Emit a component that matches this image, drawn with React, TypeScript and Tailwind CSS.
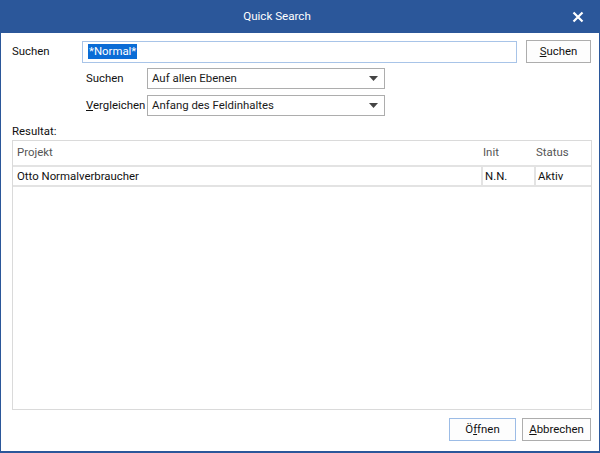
import React from 'react';

function Arrow() {
  return (
    <svg width="9" height="5" viewBox="0 0 9 5" className="shrink-0">
      <path d="M0 0h9L4.5 5z" fill="#444" />
    </svg>
  );
}

function Dropdown({ value }: { value: string }) {
  return (
    <div className="w-[238px] h-[21px] border border-[#adadad] bg-white flex items-center pl-[4px] pr-[6px]">
      <span className="flex-1 text-[#1a1a1a]">{value}</span>
      <Arrow />
    </div>
  );
}

export default function App() {
  return (
    <div
      className="w-[600px] h-[453px] flex flex-col bg-[#2b579a] px-px pb-[2px] text-[11.4px]"
      style={{ fontFamily: 'Roboto, "Liberation Sans", sans-serif' }}
    >
      <div className="h-[33px] flex items-center relative text-white">
        <div className="flex-1 text-center text-[11.6px] pr-[46px]">Quick Search</div>
        <svg width="12" height="12" viewBox="0 0 12 12" className="absolute right-[15px] top-[11px]">
          <path d="M1.5 1.5l9 9M10.5 1.5l-9 9" stroke="white" strokeWidth="2.2" />
        </svg>
      </div>

      <div className="flex-1 bg-white flex flex-col pl-[11px] pr-[8px] text-[#111]">
        <div className="flex items-center mt-[7px] h-[23px]">
          <div className="w-[70px]">Suchen</div>
          <div className="w-[435px] h-[22px] border border-[#a8c4e8] flex items-center pl-[5px]">
            <span className="bg-[#0a6cd6] text-white leading-[15px] px-px">*Normal*</span>
          </div>
          <button className="ml-[9px] w-[65px] h-[23px] border border-[#adadad] bg-[#fdfdfd]">
            <span className="underline">S</span>uchen
          </button>
        </div>

        <div className="flex items-center mt-[5px] ml-[74px] h-[21px]">
          <div className="w-[61px]">Suchen</div>
          <Dropdown value="Auf allen Ebenen" />
        </div>
        <div className="flex items-center mt-[6px] ml-[74px] h-[21px]">
          <div className="w-[61px]"><span className="underline">V</span>ergleichen</div>
          <Dropdown value="Anfang des Feldinhaltes" />
        </div>

        <div className="mt-[7px] leading-[16px]">Resultat:</div>

        <div className="mt-px w-[580px] h-[270px] border border-[#dadada]">
          <div className="flex h-[26px] border-b-2 border-[#e3e3e3] text-[#555] pt-[3px]">
            <div className="w-[468px] pl-[4px]">Projekt</div>
            <div className="w-[53px] pl-[2px]">Init</div>
            <div className="flex-1 pl-[2px]">Status</div>
          </div>
          <div className="flex h-[20px] border-b-2 border-[#e3e3e3] text-[#111]">
            <div className="w-[468px] pl-[4px] pt-[1px]">Otto Normalverbraucher</div>
            <div className="w-[53px] pl-[2px] pt-[1px] border-l-2 border-[#e3e3e3]">N.N.</div>
            <div className="flex-1 pl-[2px] pt-[1px] border-l-2 border-[#e3e3e3]">Aktiv</div>
          </div>
        </div>

        <div className="flex justify-end gap-[6px] mt-[8px]">
          <button className="w-[67px] h-[23px] border border-[#9cbce6] bg-[#fdfdfd]">
            Ö<span className="underline">f</span>fnen
          </button>
          <button className="w-[69px] h-[23px] border border-[#adadad] bg-[#fdfdfd]">
            <span className="underline">A</span>bbrechen
          </button>
        </div>
      </div>
    </div>
  );
}
